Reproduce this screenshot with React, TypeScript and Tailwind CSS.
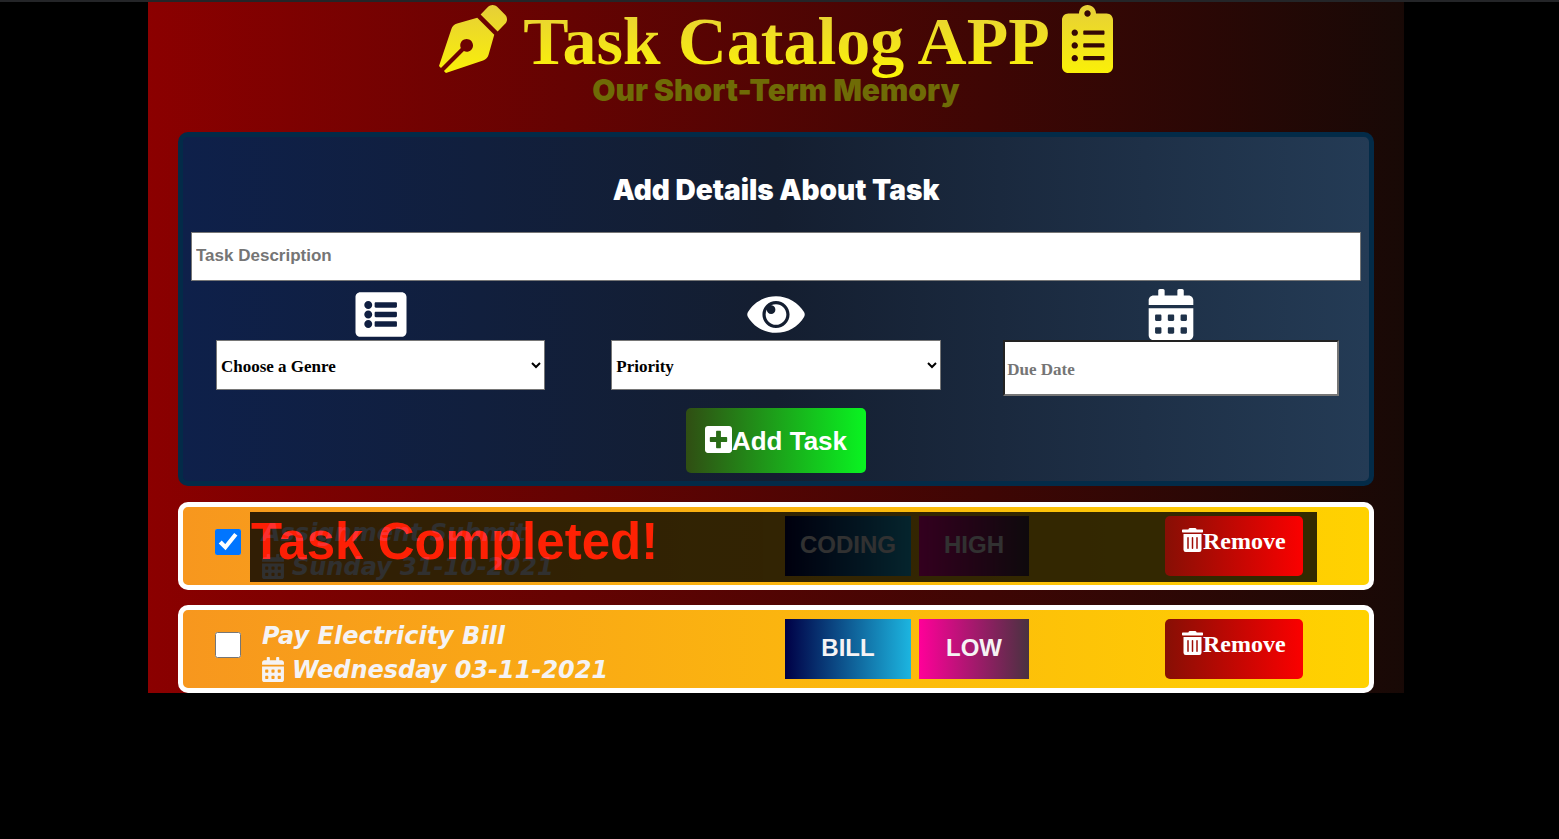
import { useState } from "react";
import {
  FaCalendarAlt,
  FaClipboardList,
  FaListAlt,
  FaPenNib,
  FaPlusSquare,
  FaTrashAlt,
} from "react-icons/fa";

type Task = {
  id: number;
  description: string;
  due: string;
  genre: string;
  priority: string;
  done: boolean;
};

const initialTasks: Task[] = [
  { id: 1, description: "Assignment Submit", due: "Sunday 31-10-2021", genre: "CODING", priority: "HIGH", done: true },
  { id: 2, description: "Pay Electricity Bill", due: "Wednesday 03-11-2021", genre: "BILL", priority: "LOW", done: false },
];

function EyeIcon({ className }: { className: string }) {
  return (
    <svg viewBox="0 0 576 512" fill="currentColor" className={className} aria-hidden="true">
      <path d="M569.354 231.631C512.969 135.949 407.81 72 288 72 168.14 72 63.004 135.994 6.646 231.631a47.999 47.999 0 0 0 0 48.739C63.031 376.051 168.19 440 288 440c119.86 0 224.996-63.994 281.354-159.631a47.997 47.997 0 0 0 0-48.738zM288 392c-75.162 0-136-60.827-136-136 0-75.162 60.826-136 136-136 75.162 0 136 60.826 136 136 0 75.162-60.826 136-136 136zm104-136c0 57.438-46.562 104-104 104s-104-46.562-104-104c0-17.708 4.431-34.379 12.236-48.973l-.001.032c0 23.651 19.173 42.823 42.824 42.823s42.824-19.173 42.824-42.823c0-23.651-19.173-42.824-42.824-42.824l-.032.001C253.621 156.431 270.292 152 288 152c57.438 0 104 46.562 104 104z" />
    </svg>
  );
}

function Header() {
  return (
    <header className="flex flex-col items-center pt-[3px]">
      <svg className="absolute size-0" aria-hidden="true">
        <defs>
          <linearGradient id="gold" x1="0" y1="0" x2="0" y2="1">
            <stop offset="0" stopColor="#e6cf38" />
            <stop offset="1" stopColor="#faf008" />
          </linearGradient>
        </defs>
      </svg>
      <div className="flex items-start">
        <FaPenNib className="mr-4 size-[68px] [&_path]:fill-[url(#gold)]" />
        <h1 className="mr-3 bg-linear-to-b/srgb from-[#e6cf38] to-[#fdf503] bg-clip-text pb-1 font-['Liberation_Serif',serif] text-[68px] leading-[72px] font-bold text-transparent">
          Task Catalog APP
        </h1>
        <FaClipboardList className="h-[68px] w-[51px] [&_path]:fill-[url(#gold)]" />
      </div>
      <p className="-mt-1 font-['Inter',sans-serif] text-[30px] leading-[26px] font-black text-[#6f6b06]">
        Our Short-Term Memory
      </p>
    </header>
  );
}

function TaskForm() {
  return (
    <form
      onSubmit={(e) => e.preventDefault()}
      className="mx-[30px] mt-[29px] flex flex-col rounded-[10px] border-[5px] border-[#032b48] bg-linear-to-r/srgb from-[#0e204a] via-[#141e30] to-[#243b55] pb-2"
    >
      <h2 className="pt-[37px] pb-[26px] text-center font-['Inter',sans-serif] text-[28px] leading-8 font-black text-white">
        Add Details About Task
      </h2>
      <input
        type="text"
        aria-label="Task Description"
        placeholder="Task Description"
        className="mx-2 h-[49px] border border-[#767676] bg-white px-1 pb-0.5 font-['Liberation_Sans',sans-serif] text-[17px] font-bold text-black placeholder:text-[#757575]"
      />
      <div className="mt-2 grid grid-cols-3">
        <div className="flex flex-col items-center">
          <label htmlFor="genre" aria-label="Genre">
            <FaListAlt className="h-[51px] w-[52px] text-white" />
          </label>
          <select
            id="genre"
            className="h-[50px] w-5/6 border border-[#767676] bg-white pt-0.5 font-['Liberation_Serif',serif] text-[17px] font-bold text-black"
          >
            <option>Choose a Genre</option>
            <option>Coding</option>
            <option>Bill</option>
          </select>
        </div>
        <div className="flex flex-col items-center">
          <label htmlFor="priority" aria-label="Priority">
            <EyeIcon className="h-[51px] w-[58px] text-white" />
          </label>
          <select
            id="priority"
            className="h-[50px] w-5/6 border border-[#767676] bg-white pt-0.5 font-['Liberation_Serif',serif] text-[17px] font-bold text-black"
          >
            <option>Priority</option>
            <option>High</option>
            <option>Low</option>
          </select>
        </div>
        <div className="flex flex-col items-center">
          <label htmlFor="due" aria-label="Due Date">
            <FaCalendarAlt className="h-[51px] w-[46px] text-white" />
          </label>
          <input
            id="due"
            type="text"
            placeholder="Due Date"
            className="h-14 w-[85%] border-2 border-t-[#222] border-r-[#767676] border-b-[#767676] border-l-[#222] bg-white px-0.5 pt-1 font-['Liberation_Serif',serif] text-[17px] font-bold text-black placeholder:text-[#757575]"
          />
        </div>
      </div>
      <button
        type="submit"
        className="mt-3 flex h-[65px] items-center self-center rounded-[5px] bg-linear-to-r/srgb from-[#304e13] to-[#09f421] px-[19px] pt-0.5 font-['Liberation_Sans',sans-serif] text-[26px] font-bold text-white"
      >
        <FaPlusSquare className="mb-1 h-[31px] w-[27px]" />
        Add Task
      </button>
    </form>
  );
}

type TaskCardProps = { task: Task; onToggle: () => void; onRemove: () => void };

function TaskCard({ task, onToggle, onRemove }: TaskCardProps) {
  return (
    <li className="relative grid grid-cols-[47px_523fr_380fr_204fr] items-start rounded-[10px] border-[5px] border-white bg-linear-to-r/srgb from-[#f7971e] to-[#ffd200] pt-[9px] pb-[1px] pl-8">
      <input
        type="checkbox"
        aria-label={task.description}
        checked={task.done}
        onChange={onToggle}
        className="mt-[13px] size-[26px]"
      />
      <div className="font-['DejaVu_Sans',sans-serif] text-[24px] leading-[34px] font-bold text-[#f5f3f4] italic">
        <p>{task.description}</p>
        <p className="flex items-center gap-2">
          <FaCalendarAlt className="mb-0.5 h-[25px] w-[22px]" />
          {task.due}
        </p>
      </div>
      <div className="flex gap-2 font-['Liberation_Sans',sans-serif] text-[24px] font-bold text-[#f5f3f4]">
        <span className="flex h-[60px] w-[126px] items-center justify-center bg-linear-to-r/srgb from-[#000046] to-[#1cb5e0] pb-0.5">
          {task.genre}
        </span>
        <span className="flex h-[60px] w-[110px] items-center justify-center bg-linear-to-r/srgb from-[#ff0099] to-[#493240] pb-0.5">
          {task.priority}
        </span>
      </div>
      {task.done && (
        <div className="absolute top-[5px] right-[52px] bottom-[3px] left-[67px] bg-black px-px font-['Liberation_Sans',sans-serif] text-[51px] leading-[60px] font-bold text-[#ff0000] opacity-80">
          Task Completed!
        </div>
      )}
      <button
        type="button"
        onClick={onRemove}
        className="z-10 flex h-[60px] items-start justify-self-start rounded-[5px] bg-linear-to-r/srgb from-[#870f05] to-[#fb0000] px-[17px] pt-3 font-['Liberation_Serif',serif] text-[24px] leading-[26px] font-bold text-white"
      >
        <FaTrashAlt className="h-6 w-[21px]" />
        Remove
      </button>
    </li>
  );
}

export default function App() {
  const [tasks, setTasks] = useState(initialTasks);
  const toggle = (id: number) =>
    setTasks(tasks.map((t) => (t.id === id ? { ...t, done: !t.done } : t)));
  const remove = (id: number) => setTasks(tasks.filter((t) => t.id !== id));

  return (
    <div className="min-h-screen border-t-2 border-[#242528] bg-black">
      <main className="mr-[155px] ml-[148px] bg-linear-to-r/srgb from-[#8b0000] to-[#180906]">
        <Header />
        <TaskForm />
        <ul className="mx-[30px] mt-4 flex flex-col gap-[15px]">
          {tasks.map((task) => (
            <TaskCard
              key={task.id}
              task={task}
              onToggle={() => toggle(task.id)}
              onRemove={() => remove(task.id)}
            />
          ))}
        </ul>
      </main>
    </div>
  );
}
